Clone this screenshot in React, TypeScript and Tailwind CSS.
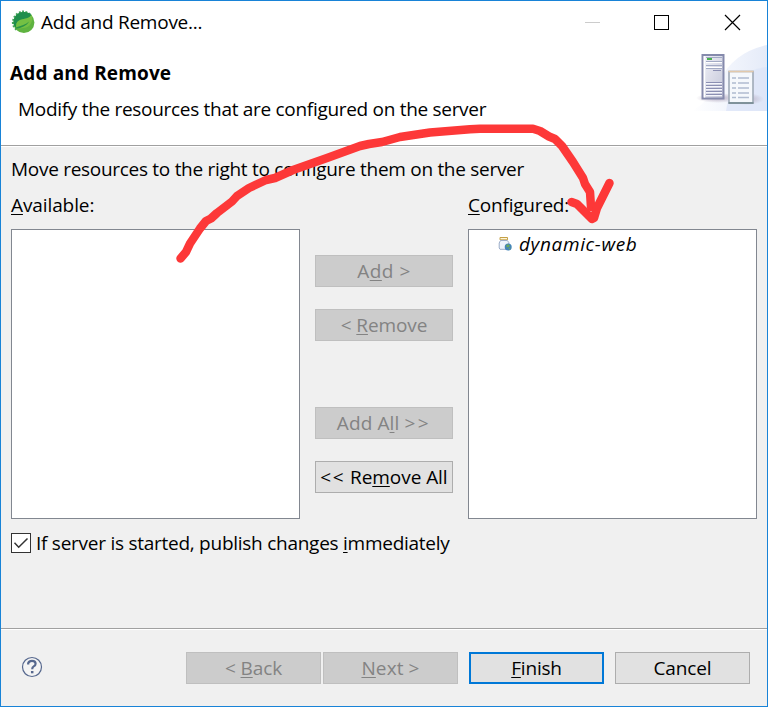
import React from "react";

function LeafIcon() {
  return (
    <svg width="26" height="26" viewBox="0 0 26 26" className="shrink-0">
      <path d="M13.500 13L20 4M13.500 13L16.500 2.200M13.500 13L13 1.500M13.500 13L9.500 2.400M13.500 13L6.200 4.400M13.500 13L3.700 7.200M13.500 13L2.300 10.600M13.500 13L1.900 14M13.500 13L2.800 17.600M13.500 13L5 20.800" stroke="#43a35b" strokeWidth="1.900" />
      <circle cx="13.900" cy="13.500" r="10.500" fill="#5fb340" />
      <path d="M3.600 14.500C3 8 7 3.500 13 3c3.500-.2 6.500.8 8.500 3-2 3.800-5.500 3.900-9 4.800C7.500 12 6 14 6 18.500c-1.400-1-2.200-2.500-2.400-4z" fill="#1f8e4c" />
      <path d="M21.800 5.200c1.400 6-.6 11.600-5.800 13.400-3.400 1-6.600.4-9.500 1.200-1-5.600.6-8.600 5.700-9.600 4.500-.9 7.600-1.400 9.600-5z" fill="#74c043" />
      <path d="M5.600 19.800c5.800-.6 10.800-2.800 13.600-7.200-3.400 2.700-8 4.600-13.600 6z" fill="#2a9447" />
    </svg>
  );
}

function ServerBanner() {
  return (
    <svg width="75" height="66" viewBox="0 0 75 66" className="block">
      <defs>
        <linearGradient id="sweep" x1="0" y1="0" x2="1" y2="0">
          <stop offset="0" stopColor="#ffffff" />
          <stop offset="0.45" stopColor="#eff3fc" />
          <stop offset="1" stopColor="#dce4f6" />
        </linearGradient>
        <linearGradient id="tower" x1="0" y1="0" x2="1" y2="1">
          <stop offset="0" stopColor="#f0f1f7" />
          <stop offset="1" stopColor="#c3c5d8" />
        </linearGradient>
        <radialGradient id="shade">
          <stop offset="0" stopColor="#b9b0c4" />
          <stop offset="1" stopColor="#b9b0c4" stopOpacity="0" />
        </radialGradient>
      </defs>
      <path d="M0 66Q18 56 28 35Q42 7 75 0V66z" fill="url(#sweep)" opacity=".75" />
      <path d="M34 66Q40 25 75 22V66z" fill="#dce4f8" opacity=".7" />
      <ellipse cx="26" cy="53" rx="22" ry="5" fill="url(#shade)" />
      <ellipse cx="54" cy="54" rx="18" ry="6" fill="url(#shade)" />
      <rect x="10.500" y="10" width="21" height="43.500" fill="url(#tower)" stroke="#858aac" strokeWidth="2" />
      <path d="M12.500 11v41.500" stroke="#fff" strokeWidth="1.500" />
      <path d="M14 12.500h16M14 16.500h16M14 20.500h16M14 23.500h16" stroke="#a2aac5" />
      <path d="M14 17.500h16M14 22.500h16" stroke="#fff" />
      <rect x="15" y="13" width="5" height="2" fill="#4aaf4e" />
      <path d="M21 25.500h8M14 37.500h16M14 40.500h16M14 43.500h16M14 46.500h16M14 49.500h16" stroke="#8b8fb2" />
      <path d="M14 38.500h16M14 41.500h16M14 44.500h16M14 47.500h16M14 50.500h16" stroke="#f4f5fb" />
      <rect x="37" y="26.500" width="24" height="31.500" fill="#f5f8fc" stroke="#9faab7" strokeWidth="1.600" />
      <path d="M36.500 26.500h25" stroke="#e2c9ac" strokeWidth="1.500" />
      <path d="M36.500 58h25" stroke="#71868d" strokeWidth="1.500" />
      <path d="M40 33h4M40 38h4M40 43h4M40 48h4M40 52.500h4" stroke="#aebbd0" strokeWidth="1.600" />
      <path d="M46 33h11M46 38h11M46 43h11M46 48h11M46 52.500h11" stroke="#b0bbd0" strokeWidth="1.600" />
    </svg>
  );
}

function JarIcon() {
  return (
    <svg width="15" height="16" viewBox="0 0 15 16" className="shrink-0">
      <path d="M2 1.500h7.500v2.300H2z" fill="#fff6d8" stroke="#c5a046" />
      <path d="M2.500 4.500h6.800l1.500 2v6.800H2L1.200 12V7z" fill="#eef4fc" stroke="#9cadc9" />
      <circle cx="10.200" cy="11" r="3.500" fill="#4384b8" />
      <path d="M8.400 8.700l2.500-.2 1 1.500-1.700 1.500-1.800-.5zM10.400 12.200l2.200-.6-.8 2.100z" fill="#6caa5c" />
    </svg>
  );
}

type ButtonProps = { className: string; disabled?: boolean; children: React.ReactNode };

function PushButton({ className, disabled, children }: ButtonProps) {
  return (
    <button
      disabled={disabled}
      className={
        "flex h-8 shrink-0 items-center justify-center whitespace-pre " +
        (disabled ? "border border-[#bfbfbf] bg-[#ccc] text-[#838383] " : "bg-[#e1e1e1] text-black ") +
        className
      }
    >
      <span>{children}</span>
    </button>
  );
}

function Key({ children }: { children: React.ReactNode }) {
  return <span className="underline decoration-1 underline-offset-2 [text-decoration-skip-ink:none]">{children}</span>;
}

function Arrow() {
  return (
    <svg width="768" height="707" viewBox="0 0 768 707" className="pointer-events-none absolute top-0 left-0" fill="none" stroke="#fd3838" strokeWidth="8.500" strokeLinecap="round" strokeLinejoin="round">
      <path d="M180.500 258.500L186 252L190 243.500L200 228.500L206 221L211 218.500L217 213L232 201.500L237 196L249 188L266 180L275 178L293 170L327 158L360 146L369 144L382 142L400 137L430 132.500L470 129.200L480 128.800L533 128.800L540 131L549 136.500L555 139L562 146L573 162L583 178L585 184L590 192L591 207" />
      <path d="M571.500 202L577 204L592 219L594 218L597 208L602 198L609.500 183" />
    </svg>
  );
}

export default function App() {
  return (
    <div className="relative flex h-[707px] w-[768px] flex-col overflow-hidden border border-[#1883d7] bg-[#f0f0f0] font-['Open_Sans','Noto_Sans',sans-serif] text-[19px] leading-6 text-black">
      <header className="flex h-36 shrink-0 flex-col bg-white">
        <div className="flex h-11 items-center pl-[9px]">
          <div className="flex items-center pb-0.5">
            <LeafIcon />
            <span className="ml-[5px] tracking-[-0.25px]">Add and Remove...</span>
          </div>
          <div className="ml-auto flex items-center">
            <svg width="182" height="44" viewBox="585 1 182 44" fill="none" stroke="#000">
              <path d="M585 22.500h15" stroke="#ccc" />
              <rect x="654.500" y="15.500" width="14" height="14" />
              <path d="M725 15l15 15M740 15l-15 15" strokeWidth="1.200" />
            </svg>
          </div>
        </div>
        <div className="flex justify-between">
          <div className="pl-[9px]">
            <h1 className="mt-4 text-[19px] leading-6 font-bold tracking-[0.14px]">Add and Remove</h1>
            <p className="mt-3 pl-2 tracking-[-0.3px]">Modify the resources that are configured on the server</p>
          </div>
          <ServerBanner />
        </div>
      </header>
      <div className="h-0.5 shrink-0 border-t border-[#a0a0a0] bg-white" />
      <main className="h-[481px] shrink-0 px-2.5">
        <p className="pt-2.5 tracking-[-0.29px]">Move resources to the right to configure them on the server</p>
        <div className="mt-3 flex">
          <section className="w-[289px]">
            <h2 className="tracking-[-0.1px]"><Key>A</Key>vailable:</h2>
            <div className="mt-3 h-[290px] border border-[#828790] bg-white" />
          </section>
          <div className="flex w-[168px] flex-col items-center pt-[62px]">
            <PushButton disabled className="w-[138px] tracking-[0.5px]">A<Key>d</Key>d &gt;</PushButton>
            <PushButton disabled className="mt-[22px] w-[138px] tracking-[-0.1px]">&lt; <Key>R</Key>emove</PushButton>
            <PushButton disabled className="mt-[66px] w-[138px] tracking-[0.1px]">Add A<Key>l</Key>l <span className="tracking-[2.500px]">&gt;&gt;</span></PushButton>
            <PushButton className="mt-[22px] w-[138px] border border-[#adadad] tracking-[-0.05px]"><span className="tracking-[1.500px]">&lt;&lt;</span> Re<Key>m</Key>ove All</PushButton>
          </div>
          <section className="w-[289px]">
            <h2 className="tracking-[-0.2px]"><Key>C</Key>onfigured:</h2>
            <div className="mt-3 h-[290px] border border-[#828790] bg-white">
              <div className="flex h-7 items-center pl-[29px]">
                <JarIcon />
                <span className="ml-[6px] tracking-[0.64px] italic">dynamic-web</span>
              </div>
            </div>
          </section>
        </div>
        <label className="mt-3 flex items-center">
          <svg width="20" height="20" viewBox="0 0 20 20" className="shrink-0" fill="none">
            <rect x=".5" y=".5" width="19" height="19" fill="#fff" stroke="#333" />
            <path d="M3.500 9.800l4.200 4.400L16.500 5.500" stroke="#333" strokeWidth="1.500" />
          </svg>
          <span className="ml-[5px] tracking-[-0.26px]">If server is started, publish changes <Key>i</Key>mmediately</span>
        </label>
      </main>
      <div className="h-0.5 shrink-0 border-t border-[#a0a0a0] bg-white" />
      <footer className="flex flex-1 items-start pt-[22px] pl-5">
        <svg width="22" height="22" viewBox="0 0 22 22" className="mt-1 shrink-0" fill="none" stroke="#56688e">
          <circle cx="11" cy="11" r="9.500" fill="#f4f4f4" strokeWidth="1.200" />
          <path d="M7.200 8.400V7.200Q8 4.800 11 4.800Q14.600 4.800 14.600 7.800Q14.600 9.400 12.700 10.400Q11.200 11.200 11.200 13.200" strokeWidth="2.200" />
          <path d="M11.200 15v2.300" strokeWidth="2.500" />
        </svg>
        <PushButton disabled className="ml-[143px] w-[135px] tracking-[-0.1px]">&lt; <Key>B</Key>ack</PushButton>
        <PushButton disabled className="ml-0.5 w-[135px] tracking-[0.1px]"><Key>N</Key>ext &gt;</PushButton>
        <PushButton className="ml-[11px] w-[135px] border-2 border-[#0078d7] tracking-[-0.2px]"><Key>F</Key>inish</PushButton>
        <PushButton className="ml-[11px] w-[135px] border border-[#adadad] tracking-[-0.1px]">Cancel</PushButton>
      </footer>
      <div className="absolute -top-px -left-px">
        <Arrow />
      </div>
    </div>
  );
}
